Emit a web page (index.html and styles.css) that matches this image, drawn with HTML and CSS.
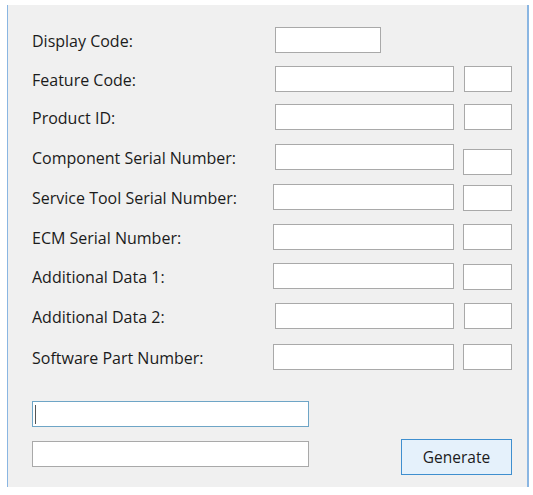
FILE: index.html
```html
<!DOCTYPE html>
<html>
<head>
<meta charset="utf-8">
<link rel="stylesheet" href="styles.css">
</head>
<body>
<div class="window">
  <div class="fields">
    <div class="row h39">
      <label class="lbl">Display Code:</label>
      <input class="box short" type="text">
    </div>
    <div class="row h38">
      <label class="lbl">Feature Code:</label>
      <input class="box big shift" type="text">
      <input class="box small shift" type="text">
    </div>
    <div class="row h40">
      <label class="lbl">Product ID:</label>
      <input class="box big shift" type="text">
      <input class="box small shift" type="text">
    </div>
    <div class="row h40">
      <label class="lbl">Component Serial Number:</label>
      <input class="box big shift" type="text">
      <input class="box small low" type="text">
    </div>
    <div class="row h40">
      <label class="lbl">Service Tool Serial Number:</label>
      <input class="box big" type="text">
      <input class="box small nudge" type="text">
    </div>
    <div class="row h39">
      <label class="lbl">ECM Serial Number:</label>
      <input class="box big" type="text">
      <input class="box small" type="text">
    </div>
    <div class="row h40">
      <label class="lbl">Additional Data 1:</label>
      <input class="box big" type="text">
      <input class="box small nudge" type="text">
    </div>
    <div class="row h41">
      <label class="lbl">Additional Data 2:</label>
      <input class="box big shift" type="text">
      <input class="box small shift" type="text">
    </div>
    <div class="row h26">
      <label class="lbl">Software Part Number:</label>
      <input class="box big" type="text">
      <input class="box small" type="text">
    </div>
  </div>
  <div class="bottom">
    <div class="outputs">
      <div class="box wide focused"><span class="caret"></span></div>
      <div class="box wide"></div>
    </div>
    <button class="generate" type="button">Generate</button>
  </div>
</div>
</body>
</html>
```
FILE: styles.css
```css
* { box-sizing: border-box; }
html, body {
  margin: 0;
  padding: 0;
  background: #ffffff;
}
body {
  font-family: "Open Sans", "Noto Sans", sans-serif;
  font-size: 16px;
  color: #1b1b1b;
}
.window {
  margin: 5px 0 0 7px;
  width: 522px;
  height: 482px;
  background: #f0f0f0;
  border-left: 1px solid #8ab6e2;
  border-right: 2px solid #8ab6e2;
  padding: 22px 0 0 24px;
  display: flex;
  flex-direction: column;
}
.fields {
  display: flex;
  flex-direction: column;
}
.row {
  display: flex;
  align-items: flex-start;
  gap: 9px;
}
.h26 { height: 26px; }
.h38 { height: 38px; }
.h39 { height: 39px; }
.h40 { height: 40px; }
.h41 { height: 41px; }
.lbl {
  width: 232px;
  padding-top: 4px;
  line-height: 20px;
  white-space: nowrap;
}
.box {
  display: block;
  flex: none;
  margin: 0;
  padding: 0;
  height: 26px;
  background: #ffffff;
  border: 1px solid #a9a9a9;
  outline: none;
  font: inherit;
}
.short { width: 106px; margin-left: 2px; }
.big { width: 181px; }
.big.shift { width: 179px; margin-left: 2px; }
.small { width: 49px; }
.small.shift { margin-left: 1px; width: 48px; }
.small.low { margin-top: 5px; }
.small.nudge { margin-top: 1px; }
.bottom {
  margin-top: 31px;
  display: flex;
  align-items: flex-start;
}
.outputs {
  display: flex;
  flex-direction: column;
  gap: 14px;
}
.wide {
  width: 277px;
  position: relative;
}
.focused {
  border-color: #6ea5c6;
}
.caret {
  position: absolute;
  left: 2px;
  top: 3px;
  width: 1px;
  height: 19px;
  background: #555;
}
.generate {
  margin: 38px 0 0 92px;
  width: 111px;
  height: 36px;
  background: #e5f1fb;
  border: 1px solid #3f8fcf;
  font-family: "Open Sans", "Noto Sans", sans-serif;
  font-size: 15.5px;
  color: #1b1b1b;
  padding: 0;
}
```
